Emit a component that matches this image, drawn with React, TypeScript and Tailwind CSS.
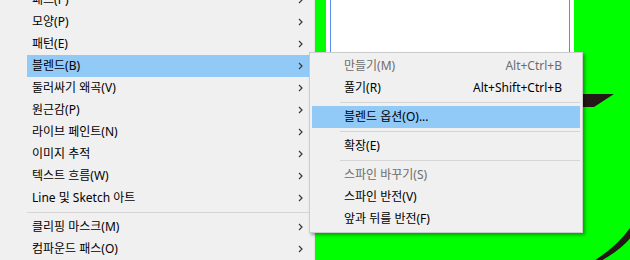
import React from 'react';

type Item =
  | { kind: 'sep' }
  | { kind: 'item'; label: string; shortcut?: string; disabled?: boolean; active?: boolean; arrow?: boolean };

const mainItems: Item[] = [
  { kind: 'item', label: '패스(P)', arrow: true },
  { kind: 'item', label: '모양(P)', arrow: true },
  { kind: 'item', label: '패턴(E)', arrow: true },
  { kind: 'item', label: '블렌드(B)', arrow: true, active: true },
  { kind: 'item', label: '둘러싸기 왜곡(V)', arrow: true },
  { kind: 'item', label: '원근감(P)', arrow: true },
  { kind: 'item', label: '라이브 페인트(N)', arrow: true },
  { kind: 'item', label: '이미지 추적', arrow: true },
  { kind: 'item', label: '텍스트 흐름(W)', arrow: true },
  { kind: 'item', label: 'Line 및 Sketch 아트', arrow: true },
  { kind: 'sep' },
  { kind: 'item', label: '클리핑 마스크(M)', arrow: true },
  { kind: 'item', label: '컴파운드 패스(O)', arrow: true },
];

const subItems: Item[] = [
  { kind: 'item', label: '만들기(M)', shortcut: 'Alt+Ctrl+B', disabled: true },
  { kind: 'item', label: '풀기(R)', shortcut: 'Alt+Shift+Ctrl+B' },
  { kind: 'sep' },
  { kind: 'item', label: '블렌드 옵션(O)...', active: true },
  { kind: 'sep' },
  { kind: 'item', label: '확장(E)' },
  { kind: 'sep' },
  { kind: 'item', label: '스파인 바꾸기(S)', disabled: true },
  { kind: 'item', label: '스파인 반전(V)' },
  { kind: 'item', label: '앞과 뒤를 반전(F)' },
];

const Chevron = () => (
  <svg width="5" height="8" viewBox="0 0 5 8" className="shrink-0">
    <path d="M1 1 L4 4 L1 7" stroke="#3a3a3a" strokeWidth="1.2" fill="none" />
  </svg>
);

const App: React.FC = () => {
  return (
    <div
      className="relative flex w-[630px] h-[260px] overflow-hidden bg-[#00ff00] text-[12px] text-black"
      style={{ fontFamily: '"Noto Sans", "Noto Sans CJK KR", sans-serif' }}
    >
      {/* main object menu */}
      <div className="w-[315px] h-full shrink-0 bg-[#f0f0f0] pl-[27px] border-r border-[#e2e2e2] overflow-hidden">
        <div className="-mt-[11px]">
          {mainItems.map((it, i) =>
            it.kind === 'sep' ? (
              <div key={i} className="h-[7px] pt-[3px]">
                <div className="h-px bg-[#d5d5d5]" />
              </div>
            ) : (
              <div
                key={i}
                className={`flex items-center justify-between h-[22px] pl-[5px] pr-[11px] leading-[22px] whitespace-nowrap ${
                  it.active ? 'bg-[#91c9f7]' : ''
                }`}
              >
                <span>{it.label}</span>
                {it.arrow && <Chevron />}
              </div>
            )
          )}
        </div>
      </div>

      {/* canvas */}
      <div className="relative flex-1 h-full pl-[11px]">
        <div className="w-[248px] h-[70px] -mt-[10px] bg-white p-[4px]">
          <div className="h-full border-x border-b border-[#5b8cf0]" />
        </div>
        <svg className="absolute inset-0" width="315" height="260" viewBox="0 0 315 260">
          <polygon points="255,94 299,94 279,107 255,107" fill="#231815" />
          <path d="M317 225 Q303 246 277 262 L284 262 Q306 250 317 236 Z" fill="#231815" />
        </svg>
      </div>

      {/* blend submenu */}
      <div className="absolute left-[309px] top-[52px] w-[274px] border border-[#cccccc] bg-[#f0f0f0] p-[2px] shadow-[2px_2px_3px_rgba(0,0,0,0.35)]">
        {subItems.map((it, i) =>
          it.kind === 'sep' ? (
            <div key={i} className="h-[7px] pt-[3px] pl-[28px]">
              <div className="h-px bg-[#d5d5d5]" />
            </div>
          ) : (
            <div
              key={i}
              className={`flex items-center justify-between h-[22px] pl-[32px] pr-[18px] leading-[22px] whitespace-nowrap ${
                it.active ? 'bg-[#91c9f7]' : ''
              } ${it.disabled ? 'text-[#6d6d6d]' : 'text-black'}`}
            >
              <span>{it.label}</span>
              {it.shortcut && <span>{it.shortcut}</span>}
            </div>
          )
        )}
      </div>
    </div>
  );
};

export default App;
